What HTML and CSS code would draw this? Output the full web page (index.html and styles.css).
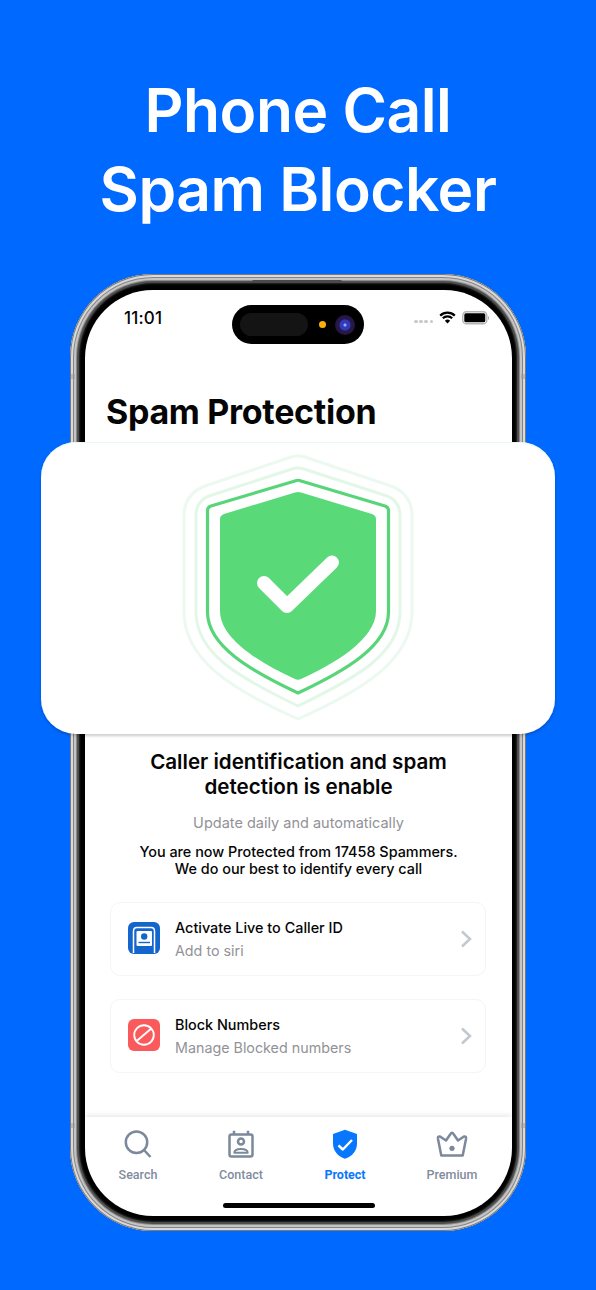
FILE: index.html
```html
<!DOCTYPE html>
<html lang="en">
<head>
  <meta charset="UTF-8" />
  <meta name="viewport" content="width=device-width, initial-scale=1.0" />
  <title>Phone Call Spam Blocker</title>
  <link rel="stylesheet" href="styles.css">
</head>
<body>

<header>
  <h1>Phone Call<br>Spam Blocker</h1>
</header>

<main class="phone">
  <div class="screen">

    <div class="status-bar">
      <span class="time">11:01</span>
      <div class="island">
        <span class="sensor"></span>
        <span class="mic-dot"></span>
        <span class="camera"></span>
      </div>
      <div class="status-icons">
        <span class="dots"><i></i><i></i><i></i><i></i></span>
        <svg class="wifi" width="17" height="13" viewBox="0 0 17 13">
          <path d="M1.2 4.6a10.4 10.4 0 0 1 14.6 0M3.8 7.3a6.7 6.7 0 0 1 9.4 0" fill="none" stroke="#000" stroke-width="2.2" />
          <path d="M8.5 12.4L5.9 9.8a3.7 3.7 0 0 1 5.2 0z" />
        </svg>
        <svg class="battery" width="28" height="14" viewBox="0 0 28 14">
          <rect x="0.8" y="0.8" width="24" height="12" rx="3.6" fill="#fff" stroke="#b5b5b5" stroke-width="1.4" />
          <rect x="2.3" y="2.3" width="21" height="9" rx="1.6" />
          <path d="M26 5v4c1.3-.4 1.3-3.6 0-4z" fill="#aaa" />
        </svg>
      </div>
    </div>

    <h2 class="page-title">Spam Protection</h2>

    <section class="shield-card">
      <svg width="234" height="270" viewBox="0 0 234 270">
        <g fill="none" stroke-linejoin="round">
          <path d="M110 5Q117 3 124 5L210 34Q231 42 231 64V160C231 208 182 238 117 267C52 238 3 208 3 160V64Q3 42 24 34Z" stroke="#ecf9f0" stroke-width="3" />
          <path d="M111 17Q117 15 123 17L206 44Q219 49 219 64V160C219 202 175 226 117 254C59 226 15 202 15 160V64Q15 49 28 44Z" stroke="#e3f7e8" stroke-width="3" />
          <path d="M114 29Q117 27.5 120 29L204 54Q207.5 55 207.5 59V160C207.5 194 164 219 117 241C70 219 26.5 194 26.5 160V59Q26.5 55 30 54Z" stroke="#58d579" stroke-width="3.2" />
        </g>
        <path d="M114 40.5Q117 39.5 120 40.5L191 62Q195 63.5 195 67V159C195 188 151 213 120 227Q117 228.5 114 227C83 213 39 188 39 159V67Q39 63.5 43 62Z" fill="#59d978" />
        <path d="M83 131L106 154L151 110.5" fill="none" stroke="#fff" stroke-width="14" stroke-linecap="round" stroke-linejoin="round" />
      </svg>
    </section>

    <section class="info">
      <h3>Caller identification and spam<br>detection is enable</h3>
      <p class="update">Update daily and automatically</p>
      <p class="protected">You are now Protected from 17458 Spammers.<br>We do our best to identify every call</p>
    </section>

    <section class="options">
      <div class="option">
        <svg class="option-icon" width="32" height="32" viewBox="0 0 32 32">
          <rect width="32" height="32" rx="6" fill="#1466cc" />
          <path d="M5.5 31V9Q5.5 5.5 9 5.5H23Q26.5 5.5 26.5 9V31" fill="none" stroke="#fff" stroke-width="1.5" />
          <rect x="8.5" y="9" width="15.5" height="15" rx="1" fill="#fff" />
          <circle cx="16.2" cy="14.5" r="3.2" fill="#1466cc" />
          <path d="M10.5 20.5h11.5" stroke="#1466cc" stroke-width="1.4" />
        </svg>
        <div class="option-text">
          <strong>Activate Live to Caller ID</strong>
          <span>Add to siri</span>
        </div>
        <svg class="chevron" width="12" height="18" viewBox="0 0 12 18">
          <path d="M2 1.5L10 9L2 16.5" />
        </svg>
      </div>
      <div class="option">
        <svg class="option-icon" width="32" height="32" viewBox="0 0 32 32">
          <rect width="32" height="32" rx="6" fill="#fb5a5c" />
          <g fill="none" stroke="#fff" stroke-width="1.9">
            <circle cx="16" cy="16" r="9.8" />
            <path d="M8.7 22L23 9.7" />
          </g>
        </svg>
        <div class="option-text">
          <strong>Block Numbers</strong>
          <span>Manage Blocked numbers</span>
        </div>
        <svg class="chevron" width="12" height="18" viewBox="0 0 12 18">
          <path d="M2 1.5L10 9L2 16.5" />
        </svg>
      </div>
    </section>

    <nav class="tab-bar">
      <a class="tab">
        <svg width="32" height="32" viewBox="0 0 32 32">
          <circle cx="14.5" cy="14.2" r="10.7" />
          <path d="M21.5 21.5L28.5 29" />
        </svg>
        Search
      </a>
      <a class="tab">
        <svg width="32" height="32" viewBox="0 0 32 32">
          <rect x="4.5" y="6.5" width="23" height="22" rx="2" />
          <path d="M9 2.8V7M23 2.8V7" />
          <circle cx="16" cy="13.5" r="3" />
          <path d="M9.3 24.7C9.3 19.8 22.7 19.8 22.7 24.7Z" stroke-width="2" />
        </svg>
        Contact
      </a>
      <a class="tab active">
        <svg width="32" height="32" viewBox="0 0 32 32">
          <path class="fill" d="M16 1.8L28 6V15.5C28 23 23 28.5 16 30.8C9 28.5 4 23 4 15.5V6Z" />
          <path class="tick" d="M9.5 17.3L13.8 21.5L23 12" />
        </svg>
        Protect
      </a>
      <a class="tab">
        <svg width="32" height="32" viewBox="0 0 32 32">
          <path d="M5.3 27.5L2 11Q1.5 8 4 8.500L10 12.500L14.500 6Q16 3.700 17.500 6L22 12.500L28 8.500Q30.500 8 30 11L26.700 27.5Z" />
          <circle class="dot" cx="16" cy="20.300" r="2.600" />
        </svg>
        Premium
      </a>
    </nav>
    <div class="home-indicator"></div>

  </div>
</main>

</body>
</html>
```

FILE: styles.css
```css
* {
  box-sizing: border-box;
}

body {
  margin: 0;
  height: 1290px;
  overflow: hidden;
  background: #0069ff;
  font-family: Inter, 'Liberation Sans', sans-serif;
  color: #050505;
}

h1, h2, h3, p {
  margin: 0;
}

header {
  height: 274px;
  padding-top: 71px;
  text-align: center;
  color: white;
}

h1 {
  font-size: 60.5px;
  line-height: 79px;
  font-weight: 600;
  letter-spacing: -0.5px;
}

/* phone body */
.phone {
  position: relative;
  width: 456px;
  height: 957px;
  margin-left: 70px;
  padding: 16px 14px 15px 15px;
  border-radius: 83px;
  background: #000;
  box-shadow:
    inset 0 0 0 1px #77797c,
    inset 0 0 0 3px #d9d9d9,
    inset 0 0 0 4px #858585,
    inset 0 0 0 6px #c4c4c4,
    inset 0 0 0 7px #8b8b8b,
    inset 0 0 1px 9px #505050,
    inset 0 0 2px 10px #222;
}

/* speaker slot */
.phone::before {
  content: "";
  position: absolute;
  top: 6px;
  left: 182px;
  width: 90px;
  height: 3px;
  border-radius: 2px;
  background: #4a4a4a;
}

/* antenna bands */
.phone::after {
  content: "";
  position: absolute;
  top: 100px;
  left: 1px;
  right: 1px;
  height: 754px;
  border: solid #999;
  border-width: 0 4px;
  clip-path: polygon(0 0, 100% 0, 100% 5px, 0 5px, 0 749px, 100% 749px, 100% 100%, 0 100%);
  opacity: 0.5;
}

.screen {
  position: relative;
  z-index: 1;
  display: flex;
  flex-direction: column;
  height: 926px;
  border-radius: 68px;
  background: white;
}

.status-bar {
  display: flex;
  align-items: center;
  height: 55px;
  margin-top: 7px;
}

.time {
  width: 147px;
  padding-left: 39px;
  margin-top: -14px;
  font-size: 17px;
  font-weight: 500;
  letter-spacing: 0.2px;
}

.island {
  display: flex;
  align-items: center;
  width: 132px;
  height: 39px;
  padding: 0 8px;
  border-radius: 20px;
  background: #000;
}

.sensor {
  width: 68px;
  height: 23px;
  border-radius: 12px;
  background: #141414;
}

.mic-dot {
  width: 7px;
  height: 7px;
  margin-left: 11px;
  border-radius: 50%;
  background: #ffae0c;
}

.camera {
  width: 20px;
  height: 20px;
  margin-left: 9px;
  border-radius: 50%;
  background: radial-gradient(circle, #8ab4ff 0 1px, #3538b8 2px 5px, #211b50 6px, #2a1440 10px);
}

.status-icons {
  display: flex;
  align-items: center;
  margin: -14px 0 0 50px;
}

.dots {
  display: flex;
  gap: 1.7px;
  margin-top: 8px;
}

.dots i {
  width: 3.5px;
  height: 3.5px;
  border-radius: 50%;
  background: #c9c9c9;
}

.wifi {
  margin-left: 6px;
}

.battery {
  margin-left: 6px;
}

.page-title {
  margin: 39px 0 0 21px;
  font-size: 34px;
  line-height: 42px;
  font-weight: 700;
  letter-spacing: -0.3px;
}

/* wider than the phone, so it hangs over both sides */
.shield-card {
  display: flex;
  justify-content: center;
  height: 292px;
  margin: 9px -43px 0 -44px;
  padding-top: 10px;
  border-radius: 35px;
  background: #fefffe;
  box-shadow: inset 0 1px 1px #e6f8f3, 0 2px 3px rgba(0, 0, 0, 0.2);
}

.info {
  padding-top: 15px;
  text-align: center;
}

h3 {
  font-size: 20.6px;
  line-height: 25px;
  font-weight: 600;
}

.update {
  margin-top: 14px;
  font-size: 14.5px;
  line-height: 20px;
  color: #929297;
}

.protected {
  margin-top: 10px;
  font-size: 14.4px;
  line-height: 17px;
  font-weight: 500;
}

.options {
  display: flex;
  flex-direction: column;
  gap: 23px;
  margin: 25px 26px 0 25px;
}

.option {
  display: flex;
  align-items: center;
  height: 74px;
  padding: 0 13px 0 17px;
  border: 1px solid #f5f5f5;
  border-radius: 10px;
}

.option-icon {
  margin-top: -2px;
}

.option-text {
  display: flex;
  flex: 1;
  flex-direction: column;
  gap: 3px;
  margin-left: 15px;
}

.option-text strong {
  font-size: 14.4px;
  line-height: 20px;
  font-weight: 500;
}

.option-text span {
  font-size: 14.3px;
  line-height: 20px;
  color: #929297;
}

.chevron path {
  fill: none;
  stroke: #c3c7ce;
  stroke-width: 2.5;
}

.tab-bar {
  display: grid;
  grid-template-columns: 106px 100px 108px 106px;
  height: 86px;
  margin-top: auto;
  padding-top: 11px;
  box-shadow: 0 -3px 5px -1px rgba(0, 0, 0, 0.09);
}

.tab {
  display: flex;
  flex-direction: column;
  align-items: center;
  gap: 7px;
  font-family: Roboto, sans-serif;
  font-size: 12.5px;
  line-height: 15px;
  font-weight: 500;
  color: #808c9d;
}

.tab svg {
  fill: none;
  stroke: #7b899b;
  stroke-width: 2.5;
  stroke-linejoin: round;
}

.tab .dot {
  fill: #7b899b;
  stroke: none;
}

.tab .fill {
  fill: #0877fd;
  stroke: none;
}

.tab .tick {
  stroke: white;
}

.tab.active {
  color: #0877fd;
  font-weight: 700;
}

.home-indicator {
  width: 152px;
  height: 5px;
  margin: 0 auto 8px;
  border-radius: 3px;
  background: #000;
}
```
